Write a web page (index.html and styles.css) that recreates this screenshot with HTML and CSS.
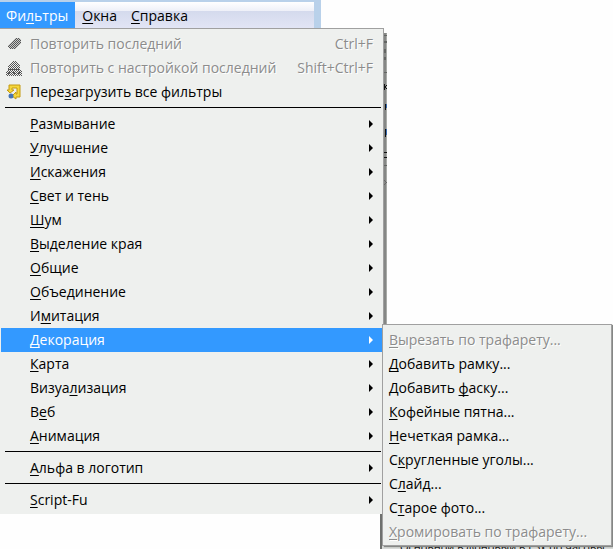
FILE: index.html
```html
<!DOCTYPE html>
<html lang="ru">
<head>
<meta charset="utf-8">
<title>Фильтры</title>
<link rel="stylesheet" href="styles.css">
</head>
<body>
<nav class="menubar">
  <button class="tab open">Фи<u>л</u>ьтры</button>
  <button class="tab"><u>О</u>кна</button>
  <button class="tab"><u>С</u>правка</button>
</nav>
<div class="window-edge" aria-hidden="true">
  <svg width="3" height="294" viewBox="0 0 3 294" shape-rendering="crispEdges">
    <path fill="#9c9e9b" d="M0 0h3v174H0z"/>
    <path fill="#858785" d="M0 0h2v294H0z"/>
    <path fill="#a9aba8" d="M2 1h1v293H2z"/>
    <path fill="#636563" d="M0 2h3v1H0zM0 8h3v2H0zM0 16h2v4H0zM0 24h2v3H0zM0 39h3v1H0zM0 132h3v1H0z"/>
    <path fill="#101010" d="M0 51h1v6H0zM1 53h1v2H1zM2 52h1v1H2zM2 55h1v1H2zM1 71h1v6H1zM1 96h1v8H1zM0 119h3v1H0zM0 124h3v1H0z"/>
    <path fill="#356ab0" d="M2 71h1v4H2zM2 96h1v6H2z"/>
    <path fill="#666" d="M0 147h1v1H0zM1 148h1v1H1zM2 149h1v1H2zM1 150h1v1H1zM0 151h1v1H0z"/>
  </svg>
</div>
<div class="panel-edge"><p>Основной в фоновый в ГЗх по часовы</p></div>
<main class="menu">
  <button class="item" disabled>
    <svg class="icon" viewBox="0 0 16 16" shape-rendering="crispEdges"><defs><pattern id="dots" width="2" height="2" patternUnits="userSpaceOnUse"><path fill="#555" d="M0 0h1v1H0zM1 1h1v1H1z"/></pattern></defs><path fill="#c8cac8" d="M10 2h3l2 2v3l-6 6H4l-2-2V9z"/><path fill="url(#dots)" d="M10 2h3l2 2v3l-6 6H4l-2-2V9z"/></svg>
    <span>Повторить последний</span><kbd>Ctrl+F</kbd>
  </button>
  <button class="item" disabled>
    <svg class="icon" viewBox="0 0 16 16" shape-rendering="crispEdges"><path fill="url(#dots)" d="M6 1h4l4 4v4l2 2v5H0v-5l2-2V5l4-2z"/><path fill="#555" d="M2 9h12v1H2zM2 12h2v2H2zM7 12h2v2H7zM12 12h2v2h-2z"/></svg>
    <span>Повторить с настройкой последний</span><kbd>Shift+Ctrl+F</kbd>
  </button>
  <button class="item">
    <svg class="icon" viewBox="0 0 16 16"><path fill="#f5d73c" stroke="#c49a10" d="M3 1h11v12h-4v2l-4-3 4-4v2h1V4H6v2h2L4 9 1 6h2z"/><circle cx="5" cy="12" r="2.500" fill="#4774b4"/></svg>
    <span>Пере<u>з</u>агрузить все фильтры</span>
  </button>
  <hr>
  <button class="item sub"><span><u>Р</u>азмывание</span></button>
  <button class="item sub"><span><u>У</u>лучшение</span></button>
  <button class="item sub"><span><u>И</u>скажения</span></button>
  <button class="item sub"><span><u>С</u>вет и тень</span></button>
  <button class="item sub"><span><u>Ш</u>ум</span></button>
  <button class="item sub"><span><u>В</u>ыделение края</span></button>
  <button class="item sub"><span><u>О</u>бщие</span></button>
  <button class="item sub"><span><u>О</u>бъединение</span></button>
  <button class="item sub"><span>И<u>м</u>итация</span></button>
  <div class="branch">
    <button class="item sub selected"><span><u>Д</u>екорация</span></button>
    <div class="submenu">
      <button class="item" disabled><span><u>В</u>ырезать по трафарету...</span></button>
      <button class="item"><span><u>Д</u>обавить рамку...</span></button>
      <button class="item"><span>Добавить <u>ф</u>аску...</span></button>
      <button class="item"><span><u>К</u>офейные пятна...</span></button>
      <button class="item"><span><u>Н</u>ечеткая рамка...</span></button>
      <button class="item"><span>С<u>к</u>ругленные уголы...</span></button>
      <button class="item"><span>С<u>л</u>айд...</span></button>
      <button class="item"><span>С<u>т</u>арое фото...</span></button>
      <button class="item" disabled><span><u>Х</u>ромировать по трафарету...</span></button>
    </div>
  </div>
  <button class="item sub"><span><u>К</u>арта</span></button>
  <button class="item sub"><span>Визуа<u>л</u>изация</span></button>
  <button class="item sub"><span>В<u>е</u>б</span></button>
  <button class="item sub"><span><u>А</u>нимация</span></button>
  <hr>
  <button class="item sub"><span><u>А</u>льфа в логотип</span></button>
  <hr>
  <button class="item sub"><span><u>S</u>cript-Fu</span></button>
</main>
</body>
</html>
```

FILE: styles.css
```css
* { box-sizing: border-box; }
body {
  margin: 0;
  min-height: 100vh;
  position: relative;
  background: #fefefe;
  color: #000;
  font: 14px/24px "Open Sans", "Noto Sans", sans-serif;
  overflow: hidden;
}
button {
  border: 0;
  margin: 0;
  background: none;
  color: inherit;
  font: inherit;
  text-align: left;
  white-space: nowrap;
}
u { text-underline-offset: 2px; text-decoration-thickness: 1px; text-decoration-skip-ink: none; }
.menubar {
  display: flex;
  width: 321px;
  height: 28px;
  border: solid #b9d1ea;
  border-width: 2px 7px 0 0;
  background: linear-gradient(#fff, #eef0f8 9px, #d4daed 9px, #e2e5f5);
}
.tab { padding: 2px 7px; }
.tab.open { padding: 2px 7px 2px 6px; background: #3399ff; color: #fff; }
.menu {
  position: relative;
  width: 384px;
  border: solid #a0a0a0;
  border-width: 1px 1px 0 0;
  padding: 3px 0 2px 1px;
  background: #eef0ee;
}
.item {
  position: relative;
  display: flex;
  align-items: center;
  width: 100%;
  height: 24px;
  padding: 0 10px 0 29px;
}
.item:disabled { color: #8c8c8c; text-shadow: 1px 1px #fff; }
.item kbd { margin-left: auto; font: inherit; }
.icon { position: absolute; left: 5px; top: 4px; width: 16px; height: 16px; }
.sub::after {
  content: "";
  margin-left: auto;
  border: solid transparent;
  border-width: 4px 0 4px 4px;
  border-left-color: currentColor;
}
.selected { background: #3399ff; color: #fff; }
hr { height: 1px; margin: 3px 2px 4px 4px; border: 0; background: #000; }
.branch { position: relative; }
.submenu {
  position: absolute;
  z-index: 1;
  left: 381px;
  top: -4px;
  width: 230px;
  padding: 3px 0 1px;
  border: 1px solid #a0a0a0;
  background: #eef0ee;
  box-shadow: 2px 1px 1px #858785;
}
.submenu .item { padding: 0 6px; }
.window-edge { position: absolute; left: 384px; top: 33px; line-height: 0; }
.panel-edge {
  position: absolute;
  left: 380px;
  right: 0;
  top: 514px;
  bottom: 0;
  overflow: hidden;
  padding: 25px 0 0 18px;
  border-left: 2px solid #6e706e;
  background: #d8dad8;
  font-size: 11px;
  line-height: 16px;
  white-space: nowrap;
}
.panel-edge p { margin: 0; }
```
